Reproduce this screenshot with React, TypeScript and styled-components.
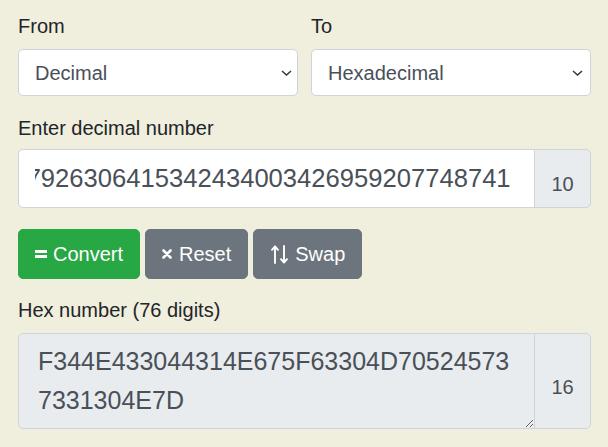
import React, { useLayoutEffect, useRef } from "react";
import styled, { createGlobalStyle } from "styled-components";

const Global = createGlobalStyle`
  html, body { margin: 0; padding: 0; background: #f0eedd; }
  body { font-family: "Liberation Sans", Arial, sans-serif; color: #212529; }
  * { box-sizing: border-box; }
`;

const Page = styled.div`
  padding: 11px 17px 0 18px;
`;

const Row = styled.div`
  display: grid;
  grid-template-columns: 1fr 1fr;
  column-gap: 13px;
  margin-bottom: 17px;
`;

const Group = styled.div<{ $mb?: number }>`
  display: flex;
  flex-direction: column;
  margin-bottom: ${(p) => p.$mb ?? 0}px;
`;

const Label = styled.label<{ $mb?: number }>`
  display: block;
  font-size: 20px;
  line-height: 30px;
  color: #212529;
  margin-bottom: ${(p) => p.$mb ?? 8}px;
`;

const SelectWrap = styled.div`
  position: relative;
`;

const Select = styled.select`
  appearance: none;
  -webkit-appearance: none;
  width: 100%;
  height: 47px;
  padding: 0 30px 0 16px;
  font-family: "Liberation Sans", Arial, sans-serif;
  font-size: 20px;
  color: #495057;
  background: #fff;
  border: 1px solid #ced4da;
  border-radius: 5px;
  outline: none;
`;

const Chevron = styled.svg<{ $right: number }>`
  position: absolute;
  right: ${(p) => p.$right}px;
  top: 21px;
  pointer-events: none;
`;

const InputGroup = styled.div`
  display: flex;
  align-items: stretch;
`;

const NumberInput = styled.input`
  flex: 1;
  min-width: 0;
  height: 59px;
  padding: 0 23px 0 16px;
  font-family: "Liberation Sans", Arial, sans-serif;
  font-size: 25.6px;
  color: #495057;
  background: #fff;
  border: 1px solid #ced4da;
  border-radius: 5px 0 0 5px;
  outline: none;
`;

const Output = styled.textarea`
  flex: 1;
  min-width: 0;
  height: 96px;
  padding: 8px 16px 8px 19px;
  font-family: "Liberation Sans", Arial, sans-serif;
  font-size: 25px;
  line-height: 39px;
  color: #495057;
  background: #e9ecef;
  border: 1px solid #ced4da;
  border-radius: 5px 0 0 5px;
  resize: vertical;
  outline: none;
  overflow: hidden;
  display: block;
`;

const Addon = styled.div<{ $pt: number }>`
  width: 57px;
  margin-left: -1px;
  display: flex;
  justify-content: center;
  align-items: center;
  padding-top: ${(p) => p.$pt}px;
  font-size: 20px;
  color: #495057;
  background: #e9ecef;
  border: 1px solid #ced4da;
  border-radius: 0 5px 5px 0;
`;

const Buttons = styled.div`
  display: flex;
  gap: 5px;
  margin-top: 21px;
  margin-bottom: 16px;
`;

const Button = styled.button<{ $variant: "green" | "gray"; $gap: number }>`
  display: inline-flex;
  align-items: center;
  gap: ${(p) => p.$gap}px;
  height: 50px;
  padding: 0 16px;
  font-family: "Liberation Sans", Arial, sans-serif;
  font-size: 20px;
  color: #fff;
  background: ${(p) => (p.$variant === "green" ? "#28a745" : "#6c757d")};
  border: 1px solid ${(p) => (p.$variant === "green" ? "#28a745" : "#6c757d")};
  border-radius: 5px;
  cursor: pointer;
`;

const ChevronIcon = ({ right }: { right: number }) => (
  <Chevron $right={right} width="11" height="6" viewBox="0 0 11 6">
    <path d="M1 1 L5.5 5 L10 1" fill="none" stroke="#3c3c3c" strokeWidth="1.6" />
  </Chevron>
);

const EqualsIcon = () => (
  <svg width="12" height="8" viewBox="0 0 12 8">
    <rect x="0" y="0" width="12" height="3" fill="#fff" />
    <rect x="0" y="5" width="12" height="3" fill="#fff" />
  </svg>
);

const TimesIcon = () => (
  <svg width="10" height="10" viewBox="0 0 10 10">
    <path d="M1.5 1.5 L8.5 8.5 M8.5 1.5 L1.5 8.5" stroke="#fff" strokeWidth="2.6" strokeLinecap="round" />
  </svg>
);

const SwapIcon = () => (
  <svg width="18" height="19" viewBox="0 0 18 19">
    <path
      d="M5 18 V1.5 M2 4.8 L5 1.5 L8 4.8 M14 1 V17.5 M11 14.2 L14 17.5 L17 14.2"
      fill="none"
      stroke="#fff"
      strokeWidth="1.9"
      strokeLinecap="round"
      strokeLinejoin="round"
    />
  </svg>
);

export default function App() {
  const inputRef = useRef<HTMLInputElement>(null);
  useLayoutEffect(() => {
    if (inputRef.current) inputRef.current.scrollLeft = 100000;
  });

  return (
    <>
      <Global />
      <Page>
        <Row>
          <Group>
            <Label>From</Label>
            <SelectWrap>
              <Select defaultValue="dec">
                <option value="dec">Decimal</option>
                <option value="hex">Hexadecimal</option>
              </Select>
              <ChevronIcon right={6} />
            </SelectWrap>
          </Group>
          <Group>
            <Label>To</Label>
            <SelectWrap>
              <Select defaultValue="hex">
                <option value="dec">Decimal</option>
                <option value="hex">Hexadecimal</option>
              </Select>
              <ChevronIcon right={8} />
            </SelectWrap>
          </Group>
        </Row>
        <Group>
          <Label $mb={6}>Enter decimal number</Label>
          <InputGroup>
            <NumberInput
              ref={inputRef}
              defaultValue="1781274031592630641534243400342695920774877410079261047926306415342434003426959207748741"
            />
            <Addon $pt={12}>10</Addon>
          </InputGroup>
        </Group>
        <Buttons>
          <Button $variant="green" $gap={6}>
            <EqualsIcon />
            Convert
          </Button>
          <Button $variant="gray" $gap={7}>
            <TimesIcon />
            Reset
          </Button>
          <Button $variant="gray" $gap={7}>
            <SwapIcon />
            Swap
          </Button>
        </Buttons>
        <Group>
          <Label $mb={8}>Hex number (76 digits)</Label>
          <InputGroup>
            <Output readOnly rows={2} defaultValue="F344E433044314E675F63304D705245737331304E7D" />
            <Addon $pt={12}>16</Addon>
          </InputGroup>
        </Group>
      </Page>
    </>
  );
}
